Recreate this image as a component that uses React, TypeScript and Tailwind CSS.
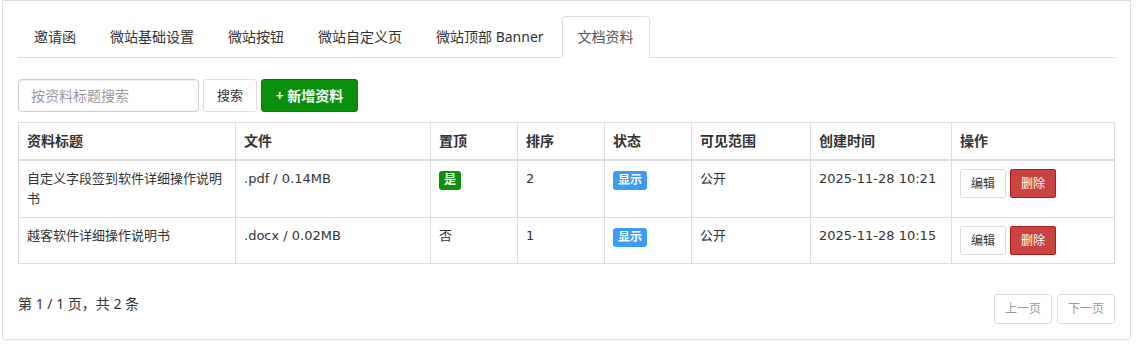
import React from 'react';

type Doc = {
    title: string;
    file: string;
    pinned: boolean;
    order: number;
    status: string;
    scope: string;
    createdAt: string;
};

const tabs = ['邀请函', '微站基础设置', '微站按钮', '微站自定义页', '微站顶部 Banner', '文档资料'];

const docs: Doc[] = [
    {
        title: '自定义字段签到软件详细操作说明书',
        file: '.pdf / 0.14MB',
        pinned: true,
        order: 2,
        status: '显示',
        scope: '公开',
        createdAt: '2025-11-28 10:21',
    },
    {
        title: '越客软件详细操作说明书',
        file: '.docx / 0.02MB',
        pinned: false,
        order: 1,
        status: '显示',
        scope: '公开',
        createdAt: '2025-11-28 10:15',
    },
];

const columns = [
    { label: '资料标题', width: 'w-[217px]' },
    { label: '文件', width: 'w-[195px]' },
    { label: '置顶', width: 'w-[87px]' },
    { label: '排序', width: 'w-[87px]' },
    { label: '状态', width: 'w-[87px]' },
    { label: '可见范围', width: 'w-[119px]' },
    { label: '创建时间', width: 'w-[141px]' },
    { label: '操作', width: '' },
];

const td = 'border border-[#ddd] px-2 py-2 align-top';

const App: React.FC = () => {
    const active = '文档资料';

    return (
        <div className="bg-white w-[1140px] h-[363px] text-[#333] font-['Noto_Sans','Noto_Sans_CJK_SC',sans-serif]">
            <div className="ml-[2px] w-[1129px] border border-[#ddd] rounded-b-[4px] p-[15px] shadow-[0_1px_1px_rgba(0,0,0,0.05)]">
                {/* tabs */}
                <ul className="flex border-b border-[#ddd] w-[1097px]">
                    {tabs.map(tab => (
                        <li key={tab} className="mr-[2px] -mb-px">
                            <a
                                className={
                                    tab === active
                                        ? 'block px-[15px] py-[10px] text-[14px] leading-5 text-[#555] bg-white border border-[#ddd] border-b-transparent rounded-t-[4px]'
                                        : 'block px-[15px] py-[10px] text-[14px] leading-5 text-[#333] border border-transparent'
                                }
                            >
                                {tab}
                            </a>
                        </li>
                    ))}
                </ul>

                {/* toolbar */}
                <div className="flex items-center mt-[21px] mb-[10px]">
                    <input
                        className="w-[181px] h-[33px] border border-[#ccc] rounded-[4px] px-3 text-[14px] placeholder-[#999] outline-none shadow-[inset_0_1px_1px_rgba(0,0,0,0.075)]"
                        placeholder="按资料标题搜索"
                    />
                    <button className="ml-[4px] h-[33px] px-[13px] border border-[#ddd] bg-white text-[13px] text-[#333] rounded-[3px]">
                        搜索
                    </button>
                    <button className="ml-[4px] h-[33px] w-[97px] border border-[#077a07] bg-[#0b900b] text-[14px] font-semibold text-white rounded-[3px]">
                        + 新增资料
                    </button>
                </div>

                {/* table */}
                <table className="w-[1097px] border-collapse border border-[#ddd] text-[13px] leading-5 table-fixed font-['DejaVu_Sans','Noto_Sans_CJK_SC',sans-serif]">
                    <thead>
                        <tr className="border-b-2 border-[#ddd]">
                            {columns.map(col => (
                                <th
                                    key={col.label}
                                    className={`${col.width} border border-[#ddd] px-2 py-2 text-left font-bold text-[14px] text-[#333]`}
                                >
                                    {col.label}
                                </th>
                            ))}
                        </tr>
                    </thead>
                    <tbody>
                        {docs.map(doc => (
                            <tr key={doc.title}>
                                <td className={td}>{doc.title}</td>
                                <td className={td}>{doc.file}</td>
                                <td className={td}>
                                    {doc.pinned ? (
                                        <span className="inline-block mt-[2px] px-[5px] h-[19px] leading-[19px] rounded-[3px] bg-[#0a930a] text-white text-[12px] font-bold">
                                            是
                                        </span>
                                    ) : (
                                        '否'
                                    )}
                                </td>
                                <td className={td}>{doc.order}</td>
                                <td className={td}>
                                    <span className="inline-block mt-[2px] px-[5px] h-[19px] leading-[19px] rounded-[3px] bg-[#3a9cf6] text-white text-[12px] font-bold">
                                        {doc.status}
                                    </span>
                                </td>
                                <td className={td}>{doc.scope}</td>
                                <td className={td}>{doc.createdAt}</td>
                                <td className={td}>
                                    <div className="flex gap-[4px]">
                                        <button className="w-[46px] h-[29px] border border-[#ddd] bg-white text-[12px] text-[#333] rounded-[2px]">
                                            编辑
                                        </button>
                                        <button className="w-[46px] h-[29px] border border-[#b01c1c] bg-[#c94343] text-[12px] text-white rounded-[2px]">
                                            删除
                                        </button>
                                    </div>
                                </td>
                            </tr>
                        ))}
                    </tbody>
                </table>

                {/* pagination */}
                <div className="flex justify-between items-start mt-[30px]">
                    <span className="text-[14px] leading-5 text-[#333]">第 1 / 1 页，共 2 条</span>
                    <div className="flex gap-[5px]">
                        <button className="w-[58px] h-[30px] border border-[#ddd] bg-white text-[12px] text-[#999] rounded-[3px]">
                            上一页
                        </button>
                        <button className="w-[58px] h-[30px] border border-[#ddd] bg-white text-[12px] text-[#999] rounded-[3px]">
                            下一页
                        </button>
                    </div>
                </div>
            </div>
        </div>
    );
};

export default App;
